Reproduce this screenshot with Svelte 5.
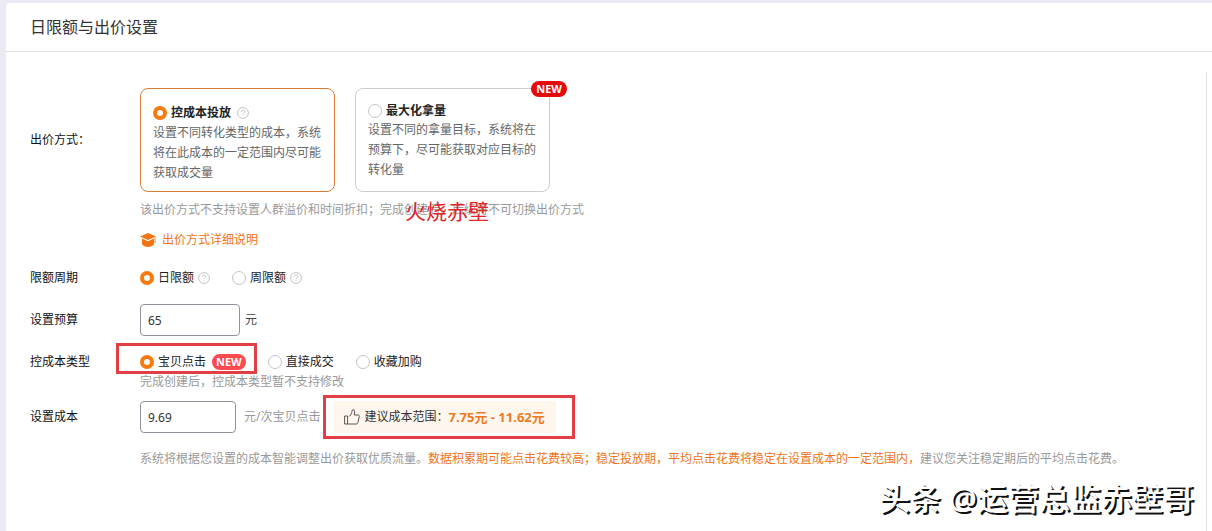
<script lang="ts">
  let bidMode = 'cost';
  let period = 'day';
  let costType = 'click';
  let budget = '65';
  let cost = '9.69';

  const modes = [
    {
      value: 'cost',
      title: '控成本投放',
      desc: '设置不同转化类型的成本，系统将在此成本的一定范围内尽可能获取成交量',
      help: true,
      isNew: false
    },
    {
      value: 'volume',
      title: '最大化拿量',
      desc: '设置不同的拿量目标，系统将在预算下，尽可能获取对应目标的转化量',
      help: false,
      isNew: true
    }
  ];

  const periods = [
    { value: 'day', text: '日限额' },
    { value: 'week', text: '周限额' }
  ];

  const costTypes = [
    { value: 'click', text: '宝贝点击', isNew: true },
    { value: 'deal', text: '直接成交', isNew: false },
    { value: 'cart', text: '收藏加购', isNew: false }
  ];
</script>

{#snippet helpIcon()}
  <svg class="help" viewBox="0 0 12 12" aria-hidden="true">
    <circle cx="6" cy="6" r="5.4" />
    <path d="M4.3 4.8C4.3 3.7 5 3.1 6 3.1s1.7.6 1.7 1.5C7.7 5.7 6 5.8 6 7.2M6 8.2v1" />
  </svg>
{/snippet}

<main>
  <header>
    <h1>日限额与出价设置</h1>
  </header>

  <div class="body">
    <div class="row" role="radiogroup" aria-labelledby="mode-label">
      <span class="name" id="mode-label">出价方式：</span>
      <div class="cards">
        {#each modes as mode}
          <label class="card" class:active={bidMode === mode.value}>
            <span class="card-title" class:tall={mode.help}>
              <input type="radio" name="mode" value={mode.value} bind:group={bidMode} />
              <strong>{mode.title}</strong>
              {#if mode.help}{@render helpIcon()}{/if}
            </span>
            <span class="desc">{mode.desc}</span>
            {#if mode.isNew}<span class="badge corner">NEW</span>{/if}
          </label>
        {/each}
      </div>
    </div>

    <div class="sub mode-hint">
      <p class="hint">
        该出价方式不支持设置人群溢价和时间折扣；完成创建后，后续将不可切换出价方式
        <span class="stamp">火烧赤壁</span>
      </p>
      <a class="doc" href="#doc">
        <svg viewBox="0 0 16 14" aria-hidden="true">
          <path d="M8 0 0 3.5 8 7l8-3.500z" />
          <path d="M2 5.600v5.600C3.400 12.900 5.600 14 8 14s4.600-1.100 6-2.800V5.600L8 8.300z" />
          <path d="M14.600 4h.8v6h-.8z" />
        </svg>
        出价方式详细说明
      </a>
    </div>

    <div class="row" role="radiogroup" aria-labelledby="period-label">
      <span class="name" id="period-label">限额周期</span>
      <div class="options period">
        {#each periods as item}
          <label class="option">
            <input type="radio" name="period" value={item.value} bind:group={period} />
            <span>{item.text}</span>
            {@render helpIcon()}
          </label>
        {/each}
      </div>
    </div>

    <div class="row">
      <label class="name" for="budget">设置预算</label>
      <div class="field">
        <input class="text wide" id="budget" type="text" bind:value={budget} />
        <span class="unit">元</span>
      </div>
    </div>

    <div class="row" role="radiogroup" aria-labelledby="type-label">
      <span class="name" id="type-label">控成本类型</span>
      <div class="options">
        {#each costTypes as item}
          <label class="option" class:marked={item.isNew}>
            <input type="radio" name="type" value={item.value} bind:group={costType} />
            <span>{item.text}</span>
            {#if item.isNew}<span class="badge soft">NEW</span>{/if}
          </label>
        {/each}
      </div>
    </div>
    <p class="sub hint type-hint">完成创建后，控成本类型暂不支持修改</p>

    <div class="row">
      <label class="name" for="cost">设置成本</label>
      <div class="field cost">
        <input class="text" id="cost" type="text" bind:value={cost} />
        <span class="hint">元/次宝贝点击</span>
        <div class="suggest marked">
          <svg viewBox="0 0 16 16" aria-hidden="true">
            <path d="M.6 7h3v8h-3zM5.400 7.400 7.400 4.800C8 3.800 7.600.6 9 .6c1.600 0 1.900 2.400 1.200 5.400h4.100c.8 0 1.200.6 1 1.300l-1.500 6.500c-.2.8-.7 1.200-1.500 1.200H3.600" />
          </svg>
          <span>建议成本范围：</span>
          <b>7.75元 - 11.62元</b>
        </div>
      </div>
    </div>

    <p class="sub hint">
      系统将根据您设置的成本智能调整出价获取优质流量。<em>数据积累期可能点击花费较高；稳定投放期，平均点击花费将稳定在设置成本的一定范围内，</em>建议您关注稳定期后的平均点击花费。
    </p>
  </div>

  <div class="watermark">头条 @运营总监赤壁哥</div>
</main>

<style>
  :global(body) {
    background: #e9eaf4;
    font-family: 'Noto Sans', 'Noto Sans CJK SC', sans-serif;
    font-size: 12px;
    line-height: 20px;
    color: #222;
  }

  * {
    box-sizing: border-box;
  }

  main {
    position: relative;
    display: flex;
    flex-direction: column;
    min-height: calc(100vh - 3px);
    margin: 3px 0 0 6px;
    background: #fff;
    border-top-left-radius: 4px;
  }

  header {
    padding: 12px 24px;
    border-bottom: 1px solid #e2e2e6;
  }

  h1 {
    margin: 0;
    font-size: 16px;
    line-height: 24px;
    font-weight: 400;
    color: #333;
  }

  p {
    margin: 0;
  }

  .body {
    flex: 1;
    margin: 20px 5px 0 0;
    padding: 16px 24px;
    border-right: 1px solid #e4e4e4;
  }

  .row {
    display: flex;
    align-items: center;
    margin-bottom: 16px;
  }

  .name {
    flex: none;
    width: 110px;
    color: #111;
  }

  .sub {
    margin-left: 110px;
  }

  .cards {
    display: flex;
    gap: 20px;
  }

  .card {
    position: relative;
    width: 195px;
    padding: 13px 12px 8px;
    border: 1px solid #ccc;
    border-radius: 8px;
    cursor: pointer;
  }

  .card.active {
    border-color: #dd7a35;
  }

  .card-title {
    display: flex;
    align-items: center;
    gap: 4px;
    height: 18px;
  }

  .card-title.tall {
    height: 21px;
  }

  .card-title .help {
    margin-left: 2px;
  }

  strong {
    font-weight: 600;
  }

  .desc {
    display: block;
    color: #666;
  }

  input[type='radio'] {
    appearance: none;
    flex: none;
    width: 14px;
    height: 14px;
    margin: 0;
    border: 1px solid #c4c4c4;
    border-radius: 50%;
    background: #fff;
  }

  input[type='radio']:checked {
    border: 4px solid #f97a0c;
  }

  .help {
    flex: none;
    width: 12px;
    height: 12px;
    fill: none;
    stroke: #c2c2c2;
  }

  .badge {
    height: 16px;
    padding: 0 5px;
    border-radius: 8px;
    background: #e60a0a;
    color: #fff;
    font-size: 11px;
    line-height: 16px;
    font-weight: 700;
  }

  .badge.corner {
    position: absolute;
    top: -8px;
    right: -18px;
  }

  .badge.soft {
    margin-left: 2px;
    padding: 0 4px;
    background: #fb4a50;
  }

  .hint {
    color: #999;
  }

  .mode-hint {
    margin-top: -8px;
    margin-bottom: 18px;
  }

  .mode-hint .hint {
    position: relative;
  }

  .stamp {
    position: absolute;
    top: 1px;
    left: 265px;
    font-size: 21px;
    color: #e0262c;
  }

  .doc {
    display: flex;
    align-items: center;
    gap: 6px;
    width: max-content;
    margin-top: 10px;
    color: #f37414;
    text-decoration: none;
  }

  .doc svg {
    width: 16px;
    height: 14px;
    fill: currentColor;
  }

  .options {
    display: flex;
    gap: 22px;
  }

  .option {
    display: flex;
    align-items: center;
    gap: 4px;
    cursor: pointer;
  }

  .field {
    display: flex;
    align-items: center;
    gap: 5px;
  }

  .field.cost {
    gap: 8px;
  }

  .text {
    width: 96px;
    height: 32px;
    padding: 0 7px;
    border: 1px solid #92929c;
    border-radius: 4px;
    background: #fff;
    font: inherit;
    color: #333;
  }

  .text.wide {
    width: 100px;
  }

  .unit {
    color: #444;
  }

  .type-hint {
    margin-top: -16px;
    margin-bottom: 9px;
  }

  .suggest {
    display: flex;
    align-items: center;
    gap: 4px;
    height: 32px;
    margin-left: 5px;
    padding: 0 11px;
    background: #fff7ee;
    color: #333;
  }

  .suggest svg {
    width: 16px;
    height: 16px;
    fill: none;
    stroke: #555;
  }

  .suggest span {
    margin-right: -4px;
  }

  .suggest b {
    font-size: 13px;
    color: #ee7a22;
  }

  /* red frames drawn over the highlighted controls */
  .marked {
    position: relative;
  }

  .marked::after {
    content: '';
    position: absolute;
    inset: -9px -11px -2px -24px;
    border: 3px solid #e33e44;
    pointer-events: none;
  }

  .suggest.marked::after {
    inset: -6px -19px -6px -10px;
  }

  em {
    font-style: normal;
    color: #f0741c;
  }

  .watermark {
    position: absolute;
    right: 18px;
    bottom: 13px;
    font-size: 31px;
    line-height: 40px;
    font-weight: 500;
    color: #fff;
    text-shadow: 2px 2px 0 #111;
    white-space: nowrap;
  }
</style>
